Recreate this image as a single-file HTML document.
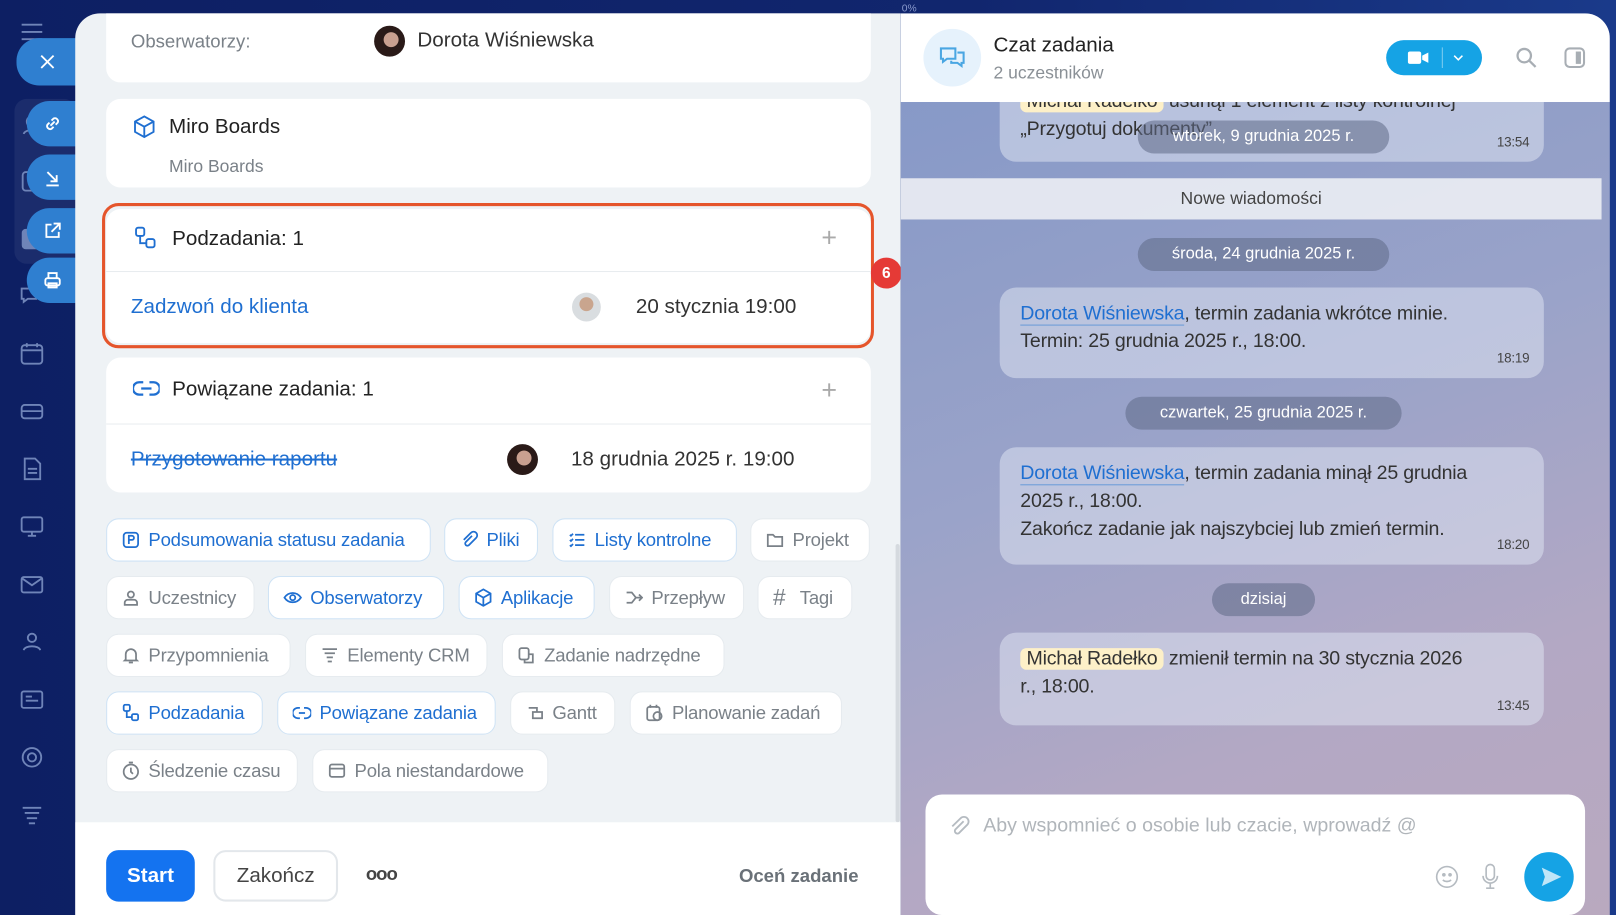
<!DOCTYPE html>
<html><head><meta charset="utf-8"><style>
*{box-sizing:border-box;margin:0;padding:0}
html,body{width:1616px;height:915px;overflow:hidden;background:#10226a}
body{font-family:"Liberation Sans",sans-serif}
#w{position:absolute;left:0;top:0;width:1568px;height:888px;transform:scale(1.0306,1.0304);transform-origin:0 0;background:linear-gradient(90deg,#0d1f63 0%,#11266e 60%,#1a3a8a 100%);overflow:hidden}
.a{position:absolute}
.side svg{position:absolute;left:18px;width:26px;height:26px;stroke:#6f84b8;fill:none;stroke-width:1.8}
.fb{position:absolute;left:26px;width:50px;height:44px;background:#2f7fd0;border-radius:22px 0 0 22px;display:flex;align-items:center;justify-content:center}
.fb svg{width:20px;height:20px;stroke:#fff;fill:none;stroke-width:1.8}
#left{left:73px;top:13px;width:801px;height:875px;background:#eef2f5;border-radius:24px 0 0 0;overflow:hidden}
.card{position:absolute;left:30px;width:742px;background:#fff;border-radius:14px}
.t{color:#333;font-size:20px}
.chip{position:absolute;height:42px;border-radius:12px;background:#fff;border:1px solid #e6ebef;font-size:18px;color:#7a8188;display:flex;align-items:center;padding-left:14px;gap:8px;letter-spacing:-0.2px}
.chip.b{color:#1f6fd1;border-color:#cfe3f5}
.chip svg{width:18px;height:18px;fill:none;stroke:currentColor;stroke-width:1.7}
#chat{left:874px;top:13px;width:688px;height:875px;border-radius:0 24px 0 0;overflow:hidden;background:linear-gradient(160deg,#8397c7 0%,#9aa3c9 45%,#b3a8c4 75%,#b9a9bf 100%)}
.msg{position:absolute;left:96px;width:528px;background:rgba(220,226,240,.55);border-radius:16px;font-size:19px;color:#333;padding:12px 50px 12px 20px;line-height:27px;letter-spacing:-0.2px}
.tm{position:absolute;right:14px;bottom:6px;font-size:13px;color:#444}
.date{position:absolute;height:32px;border-radius:16px;background:rgba(95,105,135,.55);color:#fff;font-size:16px;display:flex;align-items:center;justify-content:center}
.lnk{color:#1f6fd1;border-bottom:1px solid #6a9bd8}
</style></head><body><div id="w">
<div class="a" style="left:875px;top:3px;font-size:10px;color:#8899cc">0%</div>
<div class="side">
<svg style="top:18px" viewBox="0 0 26 26"><path d="M3 6h20M3 13h20M3 20h20"/></svg>
<div class="a" style="left:14px;top:96px;width:60px;height:160px;background:rgba(255,255,255,.06);border-radius:12px"></div>
<svg style="top:108px" viewBox="0 0 26 26"><circle cx="13" cy="10" r="5"/><path d="M5 22c1-5 15-5 16 0"/></svg>
<svg style="top:163px" viewBox="0 0 26 26"><rect x="4" y="4" width="18" height="18" rx="3"/></svg>
<svg style="top:219px" viewBox="0 0 26 26"><rect x="4" y="4" width="18" height="18" rx="3" fill="#6f84b8"/></svg>
<svg style="top:275px" viewBox="0 0 26 26"><path d="M3 5h14v10H9l-4 3v-3H3z"/></svg>
<svg style="top:330px" viewBox="0 0 26 26"><rect x="3" y="5" width="20" height="18" rx="3"/><path d="M3 10h20M8 3v4M18 3v4"/></svg>
<svg style="top:386px" viewBox="0 0 26 26"><rect x="3" y="7" width="20" height="13" rx="3"/><path d="M3 13h20"/></svg>
<svg style="top:442px" viewBox="0 0 26 26"><path d="M6 3h10l5 5v15H6z M9 13h9M9 17h9"/></svg>
<svg style="top:498px" viewBox="0 0 26 26"><rect x="3" y="4" width="20" height="14" rx="2"/><path d="M9 22h8M13 18v4"/></svg>
<svg style="top:554px" viewBox="0 0 26 26"><rect x="3" y="6" width="20" height="15" rx="2"/><path d="M3 7l10 7 10-7"/></svg>
<svg style="top:610px" viewBox="0 0 26 26"><circle cx="13" cy="9" r="4"/><path d="M5 21c1-5 15-5 16 0"/></svg>
<svg style="top:666px" viewBox="0 0 26 26"><rect x="3" y="5" width="20" height="16" rx="2"/><path d="M7 10h6M7 14h12"/></svg>
<svg style="top:722px" viewBox="0 0 26 26"><circle cx="13" cy="13" r="9"/><circle cx="13" cy="13" r="4"/></svg>
<svg style="top:778px" viewBox="0 0 26 26"><path d="M4 6h18M6 11h14M8 16h10M10 21h6"/></svg>
</div>
<div class="fb" style="left:16px;top:37px;width:60px;height:46px"><svg viewBox="0 0 20 20"><path d="M4 4l12 12M16 4L4 16"/></svg></div>
<div class="fb" style="top:98px"><svg viewBox="0 0 20 20"><path d="M8 12l4-4M7 9l-2 2a3 3 0 004 4l2-2M13 11l2-2a3 3 0 00-4-4l-2 2"/></svg></div>
<div class="fb" style="top:150px"><svg viewBox="0 0 20 20"><path d="M5 5l9 9M14 8v6H8M4 18h12"/></svg></div>
<div class="fb" style="top:202px"><svg viewBox="0 0 20 20"><path d="M9 4H4v12h12v-5M11 3h6v6M17 3l-8 8"/></svg></div>
<div class="fb" style="top:250px"><svg viewBox="0 0 20 20"><rect x="3" y="8" width="14" height="7" rx="2"/><path d="M6 8V3h8v5M6 13h8v4H6z"/></svg></div>

<div id="left" class="a">
<div class="card" style="top:-20px;height:87px"><span class="a" style="left:24px;top:37px;font-size:18px;color:#7a8188">Obserwatorzy:</span>
<div class="a" style="left:260px;top:32px;width:30px;height:30px;border-radius:50%;background:radial-gradient(circle at 55% 45%,#c9a090 0 30%,#2a1a18 32%)"></div>
<span class="a t" style="left:302px;top:35px">Dorota Wiśniewska</span></div>
<div class="card" style="top:83px;height:86px">
<svg class="a" style="left:25px;top:15px;width:24px;height:24px" viewBox="0 0 24 24" fill="none" stroke="#1f6fd1" stroke-width="1.8"><path d="M12 2l9 5v10l-9 5-9-5V7z M3 7l9 5 9-5M12 12v10"/></svg>
<span class="a t" style="left:61px;top:16px;color:#222">Miro Boards</span>
<span class="a" style="left:61px;top:56px;font-size:17px;color:#7a8188">Miro Boards</span></div>
<div class="a" style="left:26px;top:184px;width:749px;height:141px;border:3px solid #e5552b;border-radius:16px"></div>
<div class="card" style="top:190px;height:130px">
<svg class="a" style="left:26px;top:16px;width:24px;height:24px" viewBox="0 0 24 24" fill="none" stroke="#1f6fd1" stroke-width="1.8"><rect x="3" y="2" width="8" height="8" rx="2"/><rect x="13" y="13" width="8" height="8" rx="2"/><path d="M7 10v7h6"/></svg>
<span class="a t" style="left:64px;top:18px;color:#222">Podzadania: 1</span>
<span class="a" style="left:694px;top:12px;font-size:26px;color:#aaa;font-weight:300">+</span>
<div class="a" style="left:0;top:60px;width:742px;height:1px;background:#e8ecef"></div>
<span class="a" style="left:24px;top:84px;font-size:20px;color:#1f6fd1">Zadzwoń do klienta</span>
<div class="a" style="left:452px;top:81px;width:28px;height:28px;border-radius:50%;background:radial-gradient(circle at 50% 40%,#c9a58e 0 30%,#d9dde0 32%)"></div>
<span class="a t" style="left:514px;top:84px">20 stycznia 19:00</span></div>
<div class="card" style="top:334px;height:131px">
<svg class="a" style="left:26px;top:20px;width:26px;height:20px" viewBox="0 0 26 20" fill="none" stroke="#1f6fd1" stroke-width="2.2"><path d="M10 4H6a6 6 0 000 12h4M16 4h4a6 6 0 010 12h-4M8 10h10"/></svg>
<span class="a t" style="left:64px;top:20px;color:#222">Powiązane zadania: 1</span>
<span class="a" style="left:694px;top:16px;font-size:26px;color:#aaa;font-weight:300">+</span>
<div class="a" style="left:0;top:64px;width:742px;height:1px;background:#e8ecef"></div>
<span class="a" style="left:24px;top:88px;font-size:20px;color:#1f6fd1;text-decoration:line-through">Przygotowanie raportu</span>
<div class="a" style="left:389px;top:84px;width:30px;height:30px;border-radius:50%;background:radial-gradient(circle at 55% 45%,#c9a090 0 30%,#2a1a18 32%)"></div>
<span class="a t" style="left:451px;top:88px">18 grudnia 2025 r. 19:00</span></div>

<div style="position:absolute;left:30px;top:490px">
<div class="chip b" style="left:0;top:0;width:315px"><svg viewBox="0 0 18 18"><rect x="2" y="2" width="14" height="14" rx="3"/><path d="M7 13V5h3a2 2 0 010 4H7"/></svg>Podsumowania statusu zadania</div>
<div class="chip b" style="left:328px;top:0;width:91px"><svg viewBox="0 0 18 18"><path d="M12 5l-6 6a2 2 0 003 3l7-7a3.5 3.5 0 00-5-5L4 9"/></svg>Pliki</div>
<div class="chip b" style="left:433px;top:0;width:179px"><svg viewBox="0 0 18 18"><path d="M7 4h9M7 9h9M7 14h9M2 4l1 1 2-2M2 9l1 1 2-2M2 14l1 1 2-2"/></svg>Listy kontrolne</div>
<div class="chip" style="left:625px;top:0;width:116px"><svg viewBox="0 0 18 18"><path d="M2 4h5l2 2h7v9H2z"/></svg>Projekt</div>
<div class="chip" style="left:0;top:56px;width:144px"><svg viewBox="0 0 18 18"><circle cx="9" cy="6" r="3"/><path d="M3 16v-2a3 3 0 013-3h6a3 3 0 013 3v2z"/></svg>Uczestnicy</div>
<div class="chip b" style="left:157px;top:56px;width:171px"><svg viewBox="0 0 18 18"><path d="M1 9c4-6 12-6 16 0-4 6-12 6-16 0z"/><circle cx="9" cy="9" r="2.5"/></svg>Obserwatorzy</div>
<div class="chip b" style="left:342px;top:56px;width:132px"><svg viewBox="0 0 18 18"><path d="M9 1l7 4v8l-7 4-7-4V5z M2 5l7 4 7-4M9 9v8"/></svg>Aplikacje</div>
<div class="chip" style="left:488px;top:56px;width:131px"><svg viewBox="0 0 18 18"><path d="M2 4h5l4 5-4 5H2M11 9h6M14 6l3 3-3 3"/></svg>Przepływ</div>
<div class="chip" style="left:632px;top:56px;width:92px"><span style="font-size:22px;width:18px">#</span>Tagi</div>
<div class="chip" style="left:0;top:112px;width:179px"><svg viewBox="0 0 18 18"><path d="M4 13V8a5 5 0 0110 0v5l1 1H3zM7 16h4"/></svg>Przypomnienia</div>
<div class="chip" style="left:193px;top:112px;width:177px"><svg viewBox="0 0 18 18"><path d="M2 3h14M4 7h10M6 11h6M7 15h4"/></svg>Elementy CRM</div>
<div class="chip" style="left:384px;top:112px;width:216px"><svg viewBox="0 0 18 18"><rect x="2" y="2" width="9" height="11" rx="2"/><path d="M11 8h4v8H7v-3"/></svg>Zadanie nadrzędne</div>
<div class="chip b" style="left:0;top:168px;width:152px"><svg viewBox="0 0 18 18"><rect x="2" y="1" width="6" height="6" rx="1.5"/><rect x="10" y="10" width="6" height="6" rx="1.5"/><path d="M5 7v6h5"/></svg>Podzadania</div>
<div class="chip b" style="left:166px;top:168px;width:212px"><svg viewBox="0 0 18 18"><path d="M7 4H5a5 5 0 000 10h2M11 4h2a5 5 0 010 10h-2M6 9h6"/></svg>Powiązane zadania</div>
<div class="chip" style="left:392px;top:168px;width:102px"><svg viewBox="0 0 18 18"><path d="M3 4h8v4M7 8h9v6H7z"/></svg>Gantt</div>
<div class="chip" style="left:508px;top:168px;width:206px"><svg viewBox="0 0 18 18"><rect x="2" y="3" width="12" height="13" rx="2"/><circle cx="12" cy="12" r="4"/><path d="M5 1v3M11 1v3"/></svg>Planowanie zadań</div>
<div class="chip" style="left:0;top:224px;width:186px"><svg viewBox="0 0 18 18"><circle cx="9" cy="10" r="7"/><path d="M9 6v4l2 2M7 1h4"/></svg>Śledzenie czasu</div>
<div class="chip" style="left:200px;top:224px;width:229px"><svg viewBox="0 0 18 18"><rect x="2" y="3" width="14" height="12" rx="2"/><path d="M2 7h14"/></svg>Pola niestandardowe</div>
</div>
<div class="a" style="left:796px;top:515px;width:4px;height:270px;background:#d5dadf;border-radius:2px"></div>
<div class="a" style="left:0;top:785px;width:801px;height:90px;background:#fff">
<div class="a" style="left:30px;top:27px;width:86px;height:50px;background:#1473f0;border-radius:12px;color:#fff;font-size:20px;font-weight:bold;display:flex;align-items:center;justify-content:center">Start</div>
<div class="a" style="left:134px;top:27px;width:121px;height:50px;border:2px solid #e3e7eb;border-radius:12px;color:#444;font-size:20px;display:flex;align-items:center;justify-content:center">Zakończ</div>
<span class="a" style="left:282px;top:40px;font-size:18px;color:#444;font-weight:bold;letter-spacing:-1px">ooo</span>
<span class="a" style="left:644px;top:42px;font-size:18px;color:#6a7178;font-weight:bold">Oceń zadanie</span></div>
</div>

<div class="a" style="left:845px;top:250px;width:30px;height:30px;border-radius:50%;background:#e53a36;color:#fff;font-size:15px;font-weight:bold;display:flex;align-items:center;justify-content:center">6</div>

<div id="chat" class="a">
<div class="msg" style="top:60px;height:84px"><span style="background:#fdf0c8;border-radius:6px;padding:0 6px">Michał Radełko</span> usunął 1 element z listy kontrolnej<br>„Przygotuj dokumenty”<span class="tm">13:54</span></div>
<div class="a" style="left:0;top:0;width:688px;height:86px;background:#fff">
<div class="a" style="left:22px;top:15px;width:56px;height:56px;border-radius:50%;background:#e6f2fc"></div>
<svg class="a" style="left:36px;top:30px;width:28px;height:26px" viewBox="0 0 28 26" fill="none" stroke="#4aa6e2" stroke-width="2"><path d="M3 4h14v10H9l-4 3v-3H3z M19 8h6v10h-2v3l-4-3h-6v-2"/></svg>
<span class="a" style="left:90px;top:20px;font-size:20px;color:#222">Czat zadania</span>
<span class="a" style="left:90px;top:48px;font-size:17px;color:#8a9096">2 uczestników</span>
<div class="a" style="left:471px;top:26px;width:93px;height:34px;border-radius:17px;background:#15a3e5"></div>
<svg class="a" style="left:492px;top:36px;width:20px;height:14px" viewBox="0 0 20 14" fill="#fff"><rect x="0" y="1" width="13" height="12" rx="2"/><path d="M14 5l6-3v10l-6-3z"/></svg>
<div class="a" style="left:525px;top:33px;width:1px;height:20px;background:#7fcdf0"></div>
<svg class="a" style="left:535px;top:38px;width:12px;height:10px" viewBox="0 0 12 10" fill="none" stroke="#fff" stroke-width="1.5"><path d="M2 3l4 4 4-4"/></svg>
<svg class="a" style="left:596px;top:32px;width:22px;height:22px" viewBox="0 0 22 22" fill="none" stroke="#a8aeb4" stroke-width="2.2"><circle cx="9" cy="9" r="6.5"/><path d="M14 14l6 6"/></svg>
<svg class="a" style="left:643px;top:32px;width:22px;height:22px" viewBox="0 0 22 22" fill="none" stroke="#a8aeb4" stroke-width="2"><rect x="2" y="2" width="18" height="18" rx="4"/><rect x="13" y="6" width="3" height="10" fill="#a8aeb4"/></svg>
</div>
<div class="date" style="left:230px;top:104px;width:244px">wtorek, 9 grudnia 2025 r.</div>
<div class="a" style="left:0;top:160px;width:680px;height:40px;background:rgba(236,238,244,.9);display:flex;align-items:center;justify-content:center;font-size:17px;color:#444">Nowe wiadomości</div>
<div class="date" style="left:230px;top:218px;width:244px">środa, 24 grudnia 2025 r.</div>
<div class="msg" style="top:266px;height:88px"><span class="lnk">Dorota Wiśniewska</span>, termin zadania wkrótce minie.<br>Termin: 25 grudnia 2025 r., 18:00.<span class="tm">18:19</span></div>
<div class="date" style="left:218px;top:372px;width:268px">czwartek, 25 grudnia 2025 r.</div>
<div class="msg" style="top:421px;height:114px"><span class="lnk">Dorota Wiśniewska</span>, termin zadania minął 25 grudnia 2025 r., 18:00.<br>Zakończ zadanie jak najszybciej lub zmień termin.<span class="tm">18:20</span></div>
<div class="date" style="left:302px;top:553px;width:100px">dzisiaj</div>
<div class="msg" style="top:601px;height:90px;padding-right:70px"><span style="background:#fdf0c8;border-radius:6px;padding:0 6px">Michał Radełko</span> zmienił termin na 30 stycznia 2026 r., 18:00.<span class="tm">13:45</span></div>
<div class="a" style="left:24px;top:758px;width:640px;height:117px;background:#fff;border-radius:16px">
<svg class="a" style="left:22px;top:20px;width:22px;height:22px" viewBox="0 0 22 22" fill="none" stroke="#b5bbc1" stroke-width="1.8"><path d="M15 6l-8 8a2.5 2.5 0 003.5 3.5l8-8a4.5 4.5 0 00-6.4-6.4L4 11"/></svg>
<span class="a" style="left:56px;top:20px;font-size:19px;color:#b0b5ba">Aby wspomnieć o osobie lub czacie, wprowadź @</span>
<svg class="a" style="left:494px;top:68px;width:24px;height:24px" viewBox="0 0 24 24" fill="none" stroke="#b5bbc1" stroke-width="1.6"><circle cx="12" cy="12" r="10"/><circle cx="9" cy="10" r="1" fill="#b5bbc1"/><circle cx="15" cy="10" r="1" fill="#b5bbc1"/><path d="M8 15c2 2 6 2 8 0"/></svg>
<svg class="a" style="left:538px;top:66px;width:20px;height:28px" viewBox="0 0 20 28" fill="none" stroke="#b5bbc1" stroke-width="1.6"><rect x="6" y="2" width="8" height="15" rx="4"/><path d="M3 13a7 7 0 0014 0M10 20v5M6 25h8"/></svg>
<div class="a" style="left:581px;top:56px;width:48px;height:48px;border-radius:50%;background:#15a3e5"></div>
<svg class="a" style="left:596px;top:69px;width:22px;height:22px" viewBox="0 0 22 22"><path d="M2 2l19 9-19 9 3-9z" fill="#bfe6f8"/></svg>
</div>
</div>
</div></body></html>
